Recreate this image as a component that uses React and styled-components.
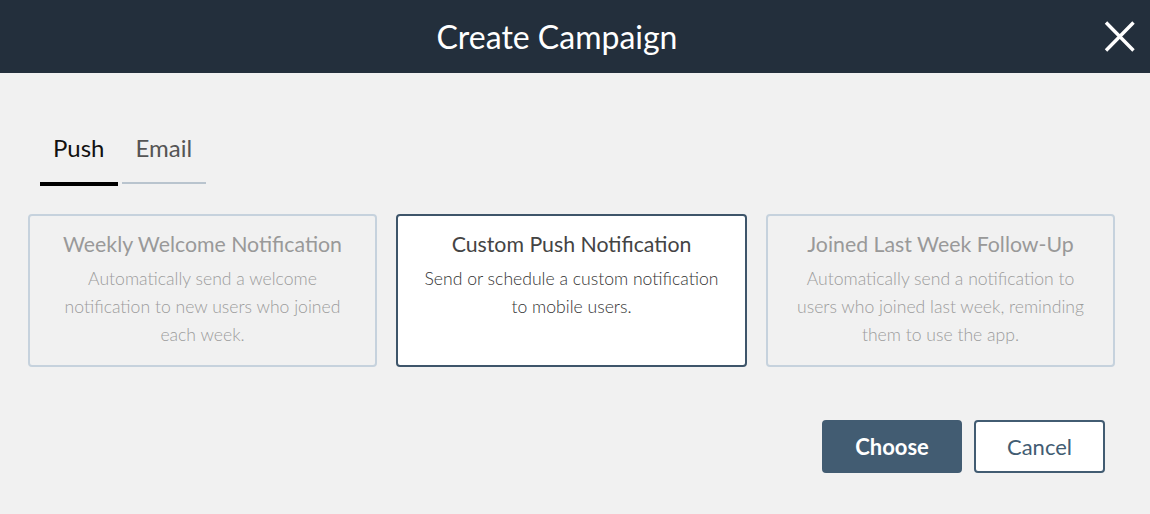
import React, { useState } from 'react';
import styled, { createGlobalStyle } from 'styled-components';

const GlobalStyle = createGlobalStyle`
  body {
    margin: 0;
    background-color: #f1f1f1;
    font-family: Lato, "Open Sans", sans-serif;
  }
`;

const Modal = styled.div`
  width: 1150px;
  height: 514px;
  background-color: #f1f1f1;
  display: flex;
  flex-direction: column;
`;

const Header = styled.header`
  height: 73px;
  display: flex;
  align-items: center;
  padding-right: 15px;
  background-color: #232f3c;
`;

const Title = styled.h1`
  flex: 1;
  margin: 0;
  padding-left: 10px;
  text-align: center;
  color: #fff;
  font-size: 32px;
  font-weight: 400;
  line-height: 38px;
`;

const CloseButton = styled.button`
  width: 31px;
  height: 31px;
  padding: 0;
  border: none;
  background: none;
  cursor: pointer;
  display: flex;
  align-items: center;
  justify-content: center;
`;

const Tabs = styled.div`
  display: flex;
  align-items: flex-start;
  gap: 4px;
  margin: 60px 0 0 40px;
`;

const Tab = styled.button`
  padding: 0 14px 19px 13px;
  border: none;
  border-bottom: ${(p) => (p.active ? '4px solid #000' : '2px solid #b9c4ce')};
  background: none;
  font-family: inherit;
  font-size: 24px;
  line-height: 30px;
  color: ${(p) => (p.active ? '#111' : '#555')};
  cursor: pointer;
`;

const Cards = styled.div`
  display: grid;
  grid-template-columns: 349px 351px 349px;
  gap: 19px;
  margin-top: 28px;
  padding-left: 28px;
`;

const Card = styled.div`
  box-sizing: border-box;
  height: 153px;
  padding: 14px 24px 16px;
  border: 2px solid ${(p) => (p.selected ? '#3e556a' : '#c6d2dd')};
  border-radius: 4px;
  background-color: ${(p) => (p.selected ? '#fff' : '#f1f1f1')};
  text-align: center;
  cursor: pointer;
`;

const CardTitle = styled.div`
  font-size: 21.3px;
  line-height: 28px;
  font-weight: 400;
  color: ${(p) => (p.selected ? '#444' : '#999')};
`;

const CardText = styled.div`
  margin-top: 7px;
  font-size: 17.6px;
  line-height: 28px;
  font-weight: 300;
  color: ${(p) => (p.selected ? '#333' : '#9c9c9c')};
`;

const Footer = styled.div`
  display: flex;
  justify-content: flex-end;
  gap: 12px;
  margin-top: 53px;
  padding-right: 45px;
`;

const Button = styled.button`
  box-sizing: border-box;
  height: 53px;
  width: ${(p) => p.w}px;
  border-radius: 4px;
  border: 2px solid #425c72;
  background-color: ${(p) => (p.primary ? '#425c72' : '#fff')};
  color: ${(p) => (p.primary ? '#fff' : '#425c72')};
  font-family: inherit;
  font-size: 22px;
  font-weight: ${(p) => (p.primary ? 700 : 400)};
  cursor: pointer;
`;

const templates = [
  {
    title: 'Weekly Welcome Notification',
    text: 'Automatically send a welcome notification to new users who joined each week.',
  },
  {
    title: 'Custom Push Notification',
    text: 'Send or schedule a custom notification to mobile users.',
  },
  {
    title: 'Joined Last Week Follow-Up',
    text: 'Automatically send a notification to users who joined last week, reminding them to use the app.',
  },
];

function App() {
  const [tab, setTab] = useState('push');
  const [selected, setSelected] = useState(1);

  return (
    <Modal>
      <GlobalStyle />
      <Header>
        <Title>Create Campaign</Title>
        <CloseButton aria-label="Close">
          <svg width="31" height="31" viewBox="0 0 31 31">
            <path d="M2 1.5 L29.5 29.5 M29.5 1.5 L2 29.5" stroke="#fff" strokeWidth="3.4" />
          </svg>
        </CloseButton>
      </Header>
      <Tabs>
        <Tab active={tab === 'push'} onClick={() => setTab('push')}>Push</Tab>
        <Tab active={tab === 'email'} onClick={() => setTab('email')}>Email</Tab>
      </Tabs>
      <Cards>
        {templates.map((t, i) => (
          <Card key={t.title} selected={selected === i} onClick={() => setSelected(i)}>
            <CardTitle selected={selected === i}>{t.title}</CardTitle>
            <CardText selected={selected === i}>{t.text}</CardText>
          </Card>
        ))}
      </Cards>
      <Footer>
        <Button primary w={140}>Choose</Button>
        <Button w={131}>Cancel</Button>
      </Footer>
    </Modal>
  );
}

export default App;
